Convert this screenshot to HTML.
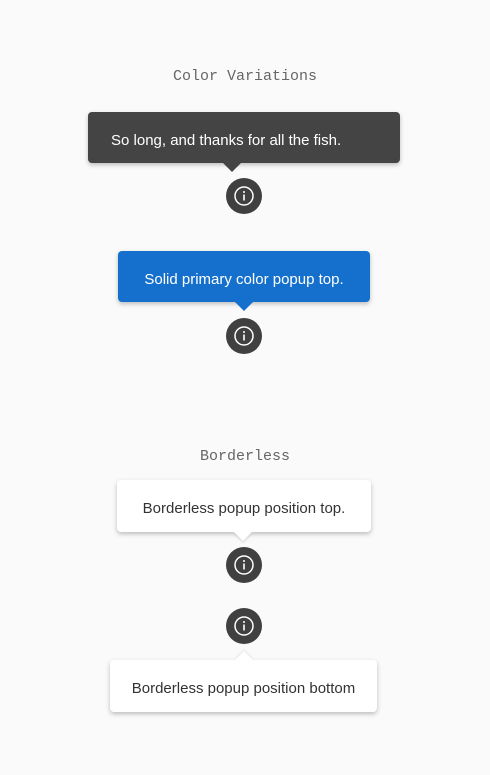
<!DOCTYPE html>
<html><head><meta charset="utf-8"><style>
body{margin:0;width:490px;height:775px;background:#fafafa;position:relative;font-family:"Liberation Sans",sans-serif;overflow:hidden}
.h{position:absolute;left:0;width:490px;text-align:center;font-family:"Liberation Mono",monospace;font-size:15px;color:#666}
.p{position:absolute;box-sizing:border-box;border-radius:4px;font-size:15px;line-height:51px;padding-top:3px;box-shadow:0 2px 5px rgba(0,0,0,.25)}
.a{position:absolute;width:0;height:0;border-left:9px solid transparent;border-right:9px solid transparent}
.i{position:absolute;width:36px;height:36px;border-radius:50%;background:#404040}
.i svg{position:absolute;left:0;top:0}
</style></head><body>
<div class="h" style="top:68px">Color Variations</div>
<div class="p" style="left:88px;top:112px;width:312px;height:51px;background:#444;color:#fff;padding-left:23px">So long, and thanks for all the fish.</div>
<div class="a" style="left:223px;top:163px;border-top:9px solid #444"></div>
<div class="i" style="left:226px;top:178px"><svg width="36" height="36"><circle cx="18" cy="18" r="9" fill="none" stroke="#fff" stroke-width="1.5"/><rect x="17.2" y="16.5" width="1.6" height="6" fill="#fff"/><circle cx="18" cy="14" r="1" fill="#fff"/></svg></div>

<div class="p" style="left:118px;top:251px;width:252px;height:51px;background:#1470cc;color:#fff;text-align:center">Solid primary color popup top.</div>
<div class="a" style="left:235px;top:302px;border-top:9px solid #1470cc"></div>
<div class="i" style="left:226px;top:318px"><svg width="36" height="36"><circle cx="18" cy="18" r="9" fill="none" stroke="#fff" stroke-width="1.5"/><rect x="17.2" y="16.5" width="1.6" height="6" fill="#fff"/><circle cx="18" cy="14" r="1" fill="#fff"/></svg></div>

<div class="h" style="top:448px">Borderless</div>
<div class="p" style="left:117px;top:480px;width:254px;height:52px;background:#fff;color:#333;text-align:center">Borderless popup position top.</div>
<div class="a" style="left:234px;top:532px;border-top:9px solid #fff;filter:drop-shadow(0 2px 1px rgba(0,0,0,.12))"></div>
<div class="i" style="left:226px;top:547px"><svg width="36" height="36"><circle cx="18" cy="18" r="9" fill="none" stroke="#fff" stroke-width="1.5"/><rect x="17.2" y="16.5" width="1.6" height="6" fill="#fff"/><circle cx="18" cy="14" r="1" fill="#fff"/></svg></div>

<div class="i" style="left:226px;top:608px"><svg width="36" height="36"><circle cx="18" cy="18" r="9" fill="none" stroke="#fff" stroke-width="1.5"/><rect x="17.2" y="16.5" width="1.6" height="6" fill="#fff"/><circle cx="18" cy="14" r="1" fill="#fff"/></svg></div>
<div class="p" style="left:110px;top:660px;width:267px;height:52px;background:#fff;color:#333;text-align:center">Borderless popup position bottom</div>
<div class="a" style="left:235px;top:651px;border-bottom:9px solid #fff;filter:drop-shadow(0 -1px 1px rgba(0,0,0,.1))"></div>
</body></html>
